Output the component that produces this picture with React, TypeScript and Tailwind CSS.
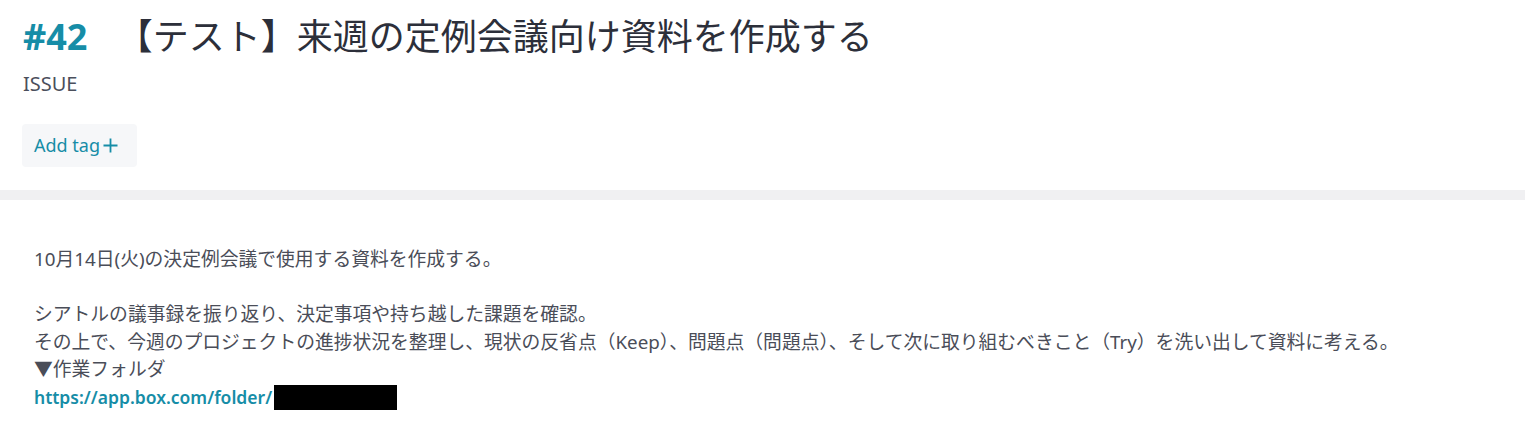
import React from "react";

export default function App() {
  return (
    <div className="min-h-screen w-full bg-white font-['Noto_Sans','Noto_Sans_CJK_JP',sans-serif]">
      <div className="px-[22px] pt-[12px]">
        <h1 className="text-[36px] leading-[50px] font-normal text-[#2c2f3a] pl-[1px]">
          <span className="font-bold text-[#168da7]">#42</span> <span className="ml-[20px]">【テスト】来週の定例会議向け資料を作成する</span>
        </h1>
        <div className="mt-[8px] text-[20px] leading-[28px] text-[#4b4f5c] pl-[1px]">ISSUE</div>
        <button className="mt-[26px] flex h-[43px] w-[115px] items-center rounded-[4px] bg-[#f6f7f9] pl-[12px] text-[18px] text-[#168da7]">
          <span>Add tag</span>
          <svg className="ml-[3px]" width="15" height="15" viewBox="0 0 15 15" fill="none" stroke="#168da7" strokeWidth="1.8">
            <path d="M7.5 0.5V14.5M0.5 7.5H14.5" />
          </svg>
        </button>
      </div>
      <div className="mt-[23px] h-[10px] w-full bg-[#f0f0f2]" />
      <div className="px-[34px] pt-[46px] text-[18.8px] leading-[27.5px] text-[#4a4d58]">
        <p>10月14日(火)の決定例会議で使用する資料を作成する。</p>
        <p>
          <br />
        </p>
        <p>シアトルの議事録を振り返り、決定事項や持ち越した課題を確認。</p>
        <p>
          その上で、今週のプロジェクトの進捗状況を整理し、現状の反省点（Keep）、問題点（問題点）、そして次に取り組むべきこと（Try）を洗い出して資料に考える。
        </p>
        <p>▼作業フォルダ</p>
        <p className="flex items-center">
          <span className="text-[17.5px] font-semibold text-[#168da7]">https://app.box.com/folder/</span>
          <span className="ml-[2px] inline-block h-[25px] w-[123px] bg-black" />
        </p>
      </div>
    </div>
  );
}
